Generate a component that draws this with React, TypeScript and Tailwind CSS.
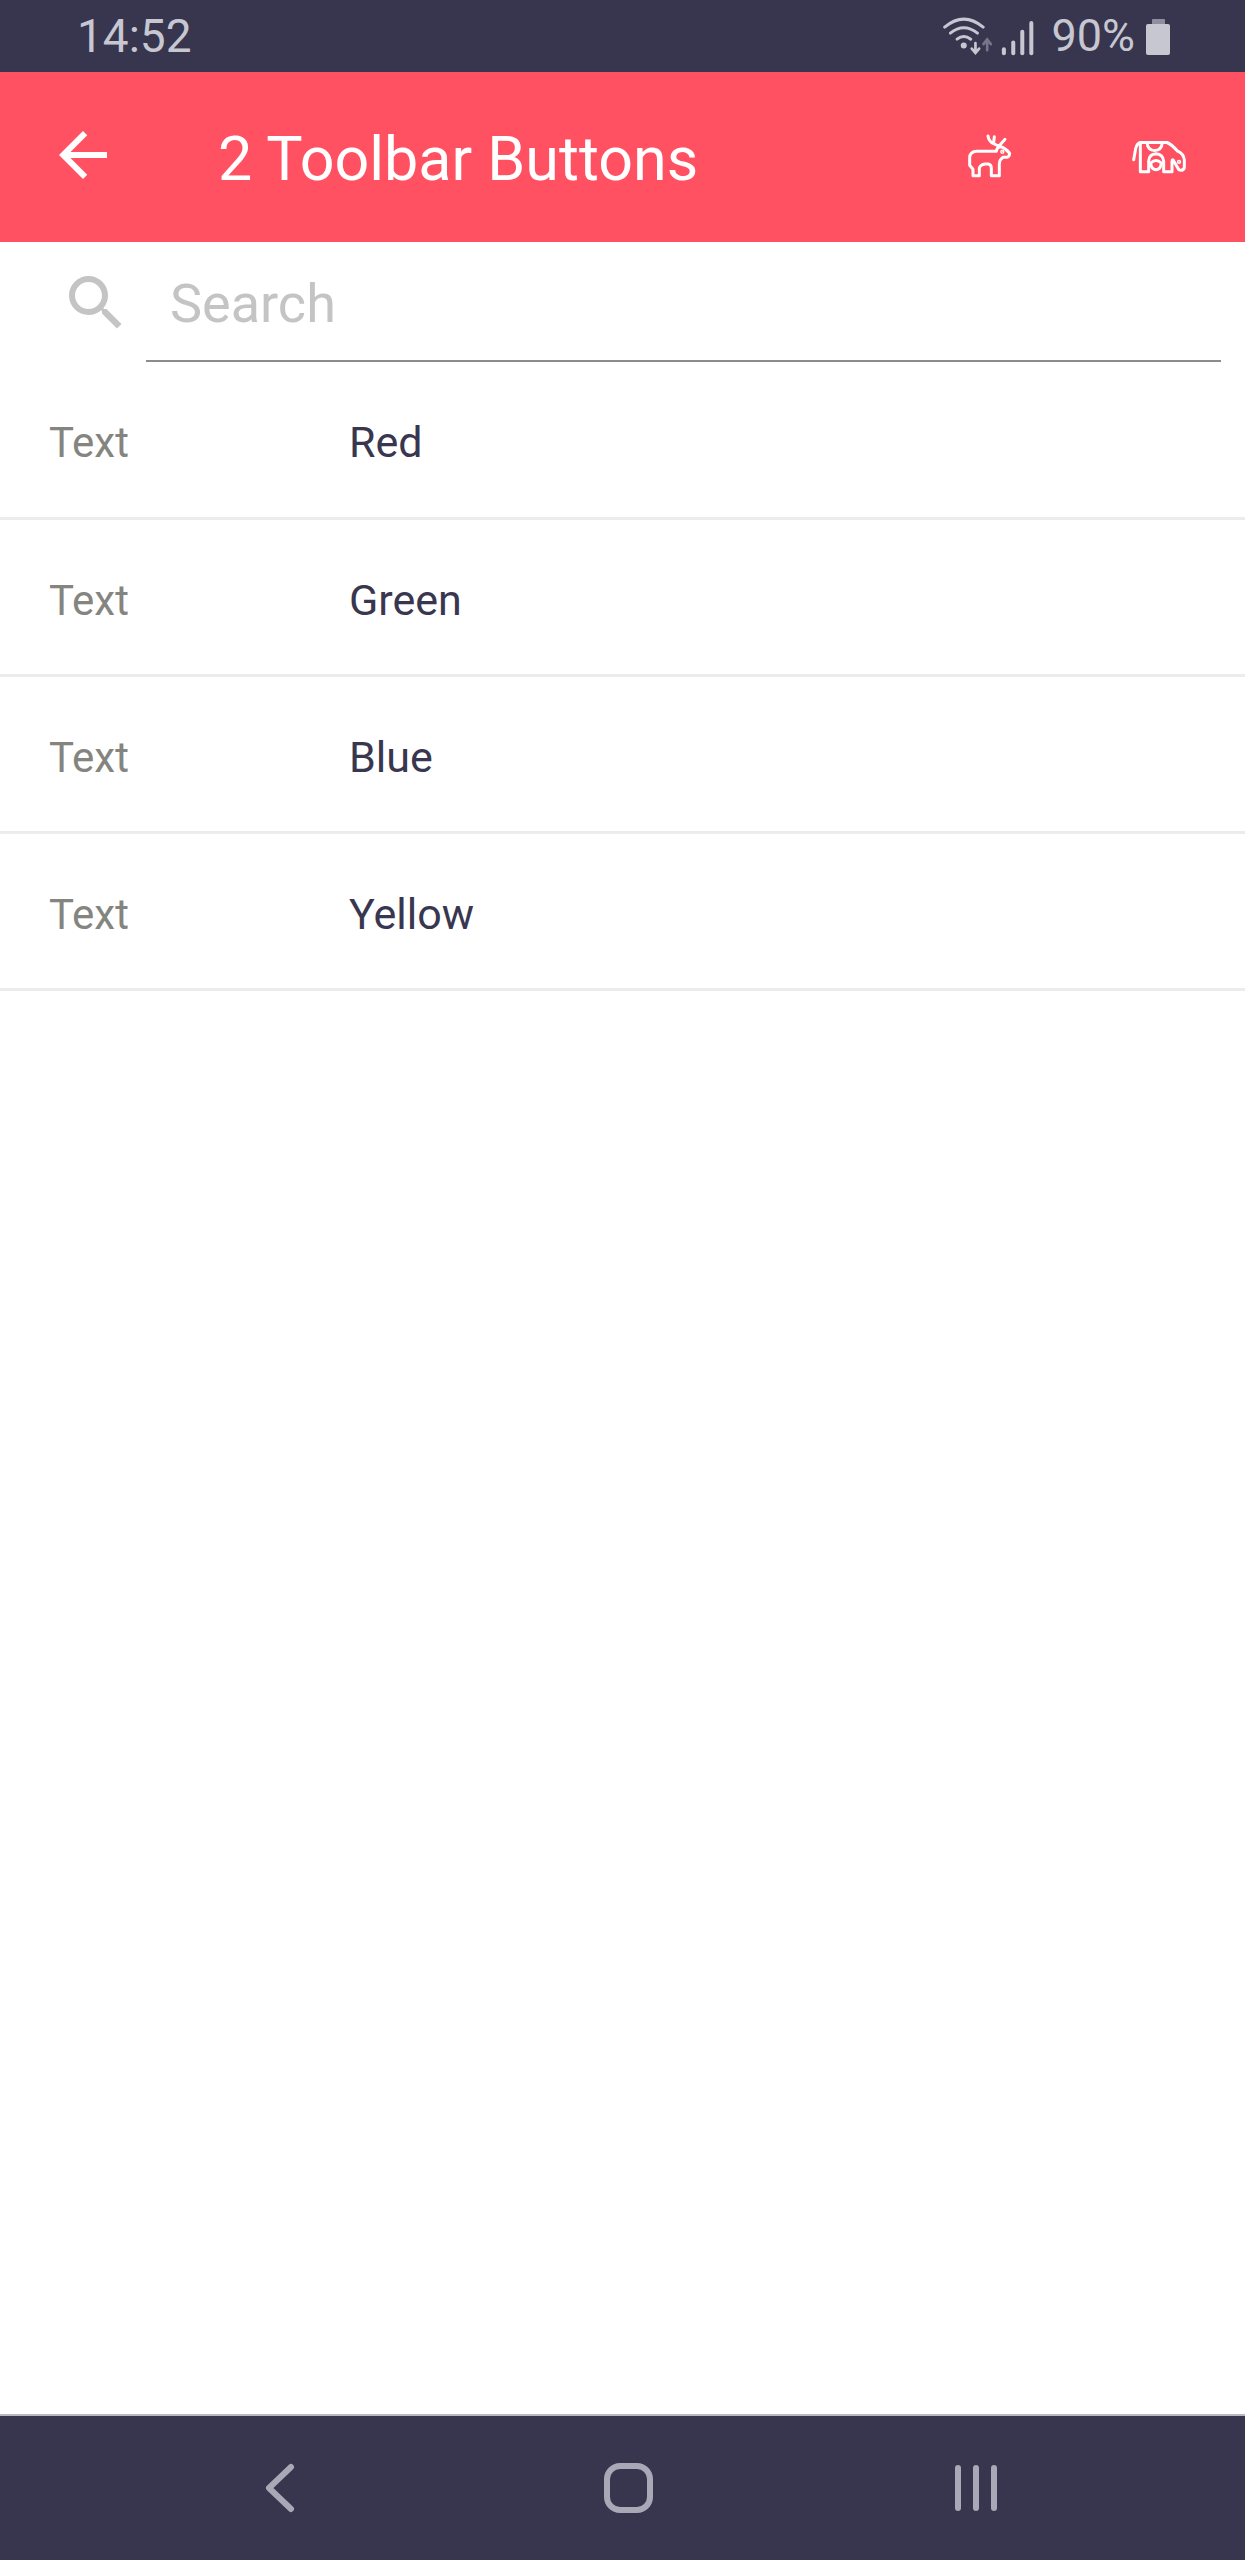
import { MdArrowBack, MdSearch } from 'react-icons/md';

const rows = ['Red', 'Green', 'Blue', 'Yellow'];

function StatusIcons() {
    return (
        <svg className="w-[92px] h-[42px]" viewBox="40 40 275 125" fill="none" strokeLinecap="round">
            <g stroke="#c7c7d2" strokeWidth="9">
                <path d="M45 76 Q102 28 160 76" />
                <path d="M62 94 Q102 62 143 94" />
                <path d="M82 112 Q102 96 123 112" />
            </g>
            <circle cx="102" cy="131" r="9" fill="#c7c7d2" />
            <path d="M137 124V150M126 140L137 153L148 140" stroke="#c7c7d2" strokeWidth="8" />
            <path d="M172 145V116M161 127L172 113L183 127" stroke="#77758a" strokeWidth="8" />
            <g stroke="#c7c7d2" strokeWidth="12">
                <path d="M222 142V154" />
                <path d="M250 122V154" />
                <path d="M277 90V154" />
                <path d="M304 64V154" />
            </g>
        </svg>
    );
}

function Battery() {
    return (
        <div className="flex flex-col items-center w-[24px] mt-[2px]">
            <div className="w-[13px] h-[5px] bg-[#8f8e9e] rounded-t-[1px]"></div>
            <div className="w-[24px] h-[31px] bg-[#c7c7d2] rounded-[2px]"></div>
        </div>
    );
}

function Deer() {
    return (
        <svg className="w-[47px] h-[45px]" viewBox="75 40 141 135" fill="none" stroke="white" strokeWidth="9" strokeLinecap="round" strokeLinejoin="round">
            <path d="M166 92H106Q86 94 86 112V134L96 146V165H115V142Q118 132 132 130H142Q151 132 151 142V165H175V130Q176 116 186 110H198Q206 108 206 98Q196 84 180 78Q168 78 166 92Z" />
            <path d="M172 76L152 66Q142 58 141 46M158 66L160 48M174 76L192 56" />
            <circle cx="184" cy="93" r="2" fill="white" />
        </svg>
    );
}

function Cow() {
    return (
        <svg className="w-[56px] h-[37px]" viewBox="32 58 168 100" fill="none" stroke="white" strokeWidth="9" strokeLinecap="round" strokeLinejoin="round">
            <path d="M60 66H140Q154 72 172 92Q190 100 192 118V142Q188 152 176 148Q168 136 158 118Q156 116 155 122V154H130V122Q128 102 107 100Q86 102 85 122V154H60Z" />
            <path d="M60 66Q50 68 46 84L40 118" />
            <path d="M80 66Q82 90 103 90Q124 90 126 66" />
            <path d="M91 128Q107 112 123 128Q122 146 107 148Q92 146 91 128Z" />
            <circle cx="176" cy="124" r="2" fill="white" />
        </svg>
    );
}

function App() {
    return (
        <div className="flex flex-col h-[2560px] bg-white font-['Roboto',sans-serif]">
            <div className="flex justify-between items-center h-[72px] bg-[#38354e] pl-[77px] pr-[75px]">
                <span className="text-[46px] leading-[72px] text-[#c7c7d2]">14:52</span>
                <div className="flex items-center">
                    <StatusIcons />
                    <span className="ml-[16px] mr-[11px] text-[45px] leading-[72px] text-[#c7c7d2]">90%</span>
                    <Battery />
                </div>
            </div>
            <header className="flex items-center h-[170px] bg-[#ff5162] pl-[47px] pr-[58px]">
                <MdArrowBack className="text-white w-[72px] h-[72px] -mt-[4px]" />
                <h1 className="ml-[99px] mt-[4px] text-[61px] leading-none text-white font-normal">2 Toolbar Buttons</h1>
                <div className="ml-auto flex items-center gap-[118px] mt-[-1px]">
                    <Deer />
                    <Cow />
                </div>
            </header>
            <div className="flex h-[120px] pl-[60px] pr-[24px]">
                <MdSearch className="text-[#c4c4c4] w-[72px] h-[72px] mt-[25px] shrink-0" />
                <div className="flex-1 ml-[14px] h-[120px] border-b-2 border-[#8c8c8c]">
                    <input
                        className="w-full h-[72px] mt-[25px] pl-[24px] text-[54px] leading-none outline-none bg-transparent placeholder:text-[#c4c4c4]"
                        placeholder="Search"
                    />
                </div>
            </div>
            <ul>
                {rows.map((name) => (
                    <li key={name} className="flex items-center h-[157px] pl-[49px] pt-[6px] border-b-[3px] border-[#ececec] text-[42px] first:h-[158px]">
                        <span className="w-[300px] text-[#85857f]">Text</span>
                        <span className="text-[43px] text-[#39364f]">{name}</span>
                    </li>
                ))}
            </ul>
            <div className="flex-1"></div>
            <nav className="relative flex items-center h-[146px] bg-[#38354e] border-t-2 border-[#b9b8c2]">
                <svg className="ml-[264px] w-[32px] h-[50px]" viewBox="0 0 32 50" fill="none" stroke="#a9a8b6" strokeWidth="6" strokeLinecap="round" strokeLinejoin="round">
                    <path d="M27 4L5 25L27 46" />
                </svg>
                <div className="ml-[308px] w-[49px] h-[50px] border-[6px] border-[#a9a8b6] rounded-[16px]"></div>
                <div className="ml-[302px] flex gap-[12px]">
                    <div className="w-[6px] h-[46px] bg-[#a9a8b6] rounded-full"></div>
                    <div className="w-[6px] h-[46px] bg-[#a9a8b6] rounded-full"></div>
                    <div className="w-[6px] h-[46px] bg-[#a9a8b6] rounded-full"></div>
                </div>
            </nav>
        </div>
    );
}

export default App;
